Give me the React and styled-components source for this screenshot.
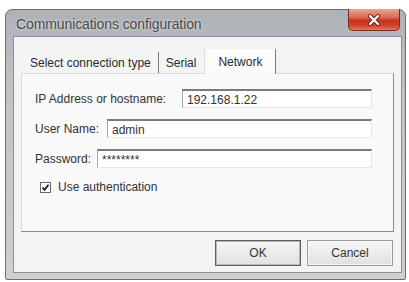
import React from "react";
import styled, { createGlobalStyle } from "styled-components";

const GlobalStyle = createGlobalStyle`
  body {
    margin: 0;
    background: #ffffff;
    font-family: "Liberation Sans", Arial, sans-serif;
  }
`

const Window = styled.div`
  margin: 9px 0 0 5px;
  width: 401px;
  height: 271px;
  box-sizing: border-box;
  border: 1px solid #6c6e70;
  border-radius: 7px 7px 2px 2px;
  background: linear-gradient(180deg, #aeb2b6 0%, #c0c3c6 30%, #cdd0d3 100%);
  padding: 0 3px 6px 7px;
  display: flex;
  flex-direction: column;
`

const TitleBar = styled.div`
  height: 26px;
  display: flex;
  justify-content: space-between;
  align-items: flex-start;
`

const Title = styled.div`
  padding: 6px 0 0 3px;
  font-size: 14px;
  color: #4a4a4a;
  text-shadow: 0 0 3px rgba(255, 255, 255, 0.8);
  letter-spacing: -0.1px;
`

const CloseButton = styled.div`
  margin: -1px 2px 0 0;
  width: 52px;
  height: 22px;
  box-sizing: border-box;
  border: 1px solid #7d2a20;
  border-top: none;
  border-radius: 0 0 5px 5px;
  background: linear-gradient(180deg, #e9a596 0%, #dc6a55 40%, #c8301c 55%, #d1452d 80%, #e17a5c 100%);
  display: flex;
  align-items: center;
  justify-content: center;
`

const Client = styled.div`
  flex: 1;
  background: #f3f3f3;
  border: 1px solid #8e9094;
  padding: 13px 7px 4px 7px;
  display: flex;
  flex-direction: column;
`

const TabStrip = styled.div`
  height: 23px;
  display: flex;
  align-items: flex-end;
  padding-left: 2px;
`

const Tab = styled.div`
  height: ${p => (p.active ? 25 : 21)}px;
  padding: 0 ${p => p.pad}px;
  box-sizing: border-box;
  display: flex;
  align-items: center;
  font-size: 12px;
  color: #2a2a2a;
  background: ${p => (p.active ? "#fbfbfb" : "#f4f4f4")};
  border-right: 1px solid ${p => p.edge};
  border-left: ${p => (p.active ? "1px solid #dcdcdc" : "none")};
  margin-bottom: ${p => (p.active ? -1 : 0)}px;
  position: relative;
  z-index: ${p => (p.active ? 1 : 0)};
`

const Panel = styled.div`
  height: 159px;
  box-sizing: border-box;
  background: #f9f9f9;
  border: 1px solid #dadada;
  border-right-color: #8a8a8a;
  border-bottom-color: #8a8a8a;
  padding: 15px 21px 0 13px;
  display: flex;
  flex-direction: column;
  gap: 11px;
`

const Row = styled.div`
  display: flex;
  align-items: center;
  height: 19px;
`

const Label = styled.label`
  width: ${p => p.w}px;
  flex-shrink: 0;
  font-size: 12px;
  color: #333333;
`

const Field = styled.div`
  flex: 1;
  height: 19px;
  box-sizing: border-box;
  background: #ffffff;
  border-top: 2px solid #7a7a7a;
  border-left: 1px solid #a8a8a8;
  border-right: 1px solid #e4e4e4;
  border-bottom: 1px solid #e8e8e8;
  padding: 1px 0 0 4px;
  font-size: 12px;
  color: #333;
  display: flex;
  align-items: center;
`

const CheckRow = styled.div`
  display: flex;
  align-items: center;
  margin: 1px 0 0 5px;
  gap: 7px;
  font-size: 12px;
  color: #333333;
`

const Box = styled.div`
  width: 11px;
  height: 11px;
  box-sizing: border-box;
  border: 1px solid #6a6a6a;
  background: #ffffff;
  display: flex;
  align-items: center;
  justify-content: center;
`

const ButtonRow = styled.div`
  display: flex;
  justify-content: flex-end;
  gap: 6px;
  margin-top: 8px;
  padding-right: 1px;
`

const Button = styled.div`
  width: 86px;
  height: 26px;
  box-sizing: border-box;
  border: 1px solid ${p => (p.primary ? "#5c5c5c" : "#9a9a9a")};
  box-shadow: ${p => (p.primary ? "inset 0 0 0 1px #b8b8b8" : "inset 0 0 0 1px #f8f8f8")};
  background: linear-gradient(180deg, #f6f6f6 0%, #ececec 50%, #e0e0e0 100%);
  display: flex;
  align-items: center;
  justify-content: center;
  font-size: 12px;
  color: #333;
`

const CloseGlyph = () => (
  <svg width="14" height="12" viewBox="0 0 14 12">
    <path d="M3 2 L11 10 M11 2 L3 10" stroke="#6b2418" strokeWidth="4" strokeLinecap="round" />
    <path d="M3 2 L11 10 M11 2 L3 10" stroke="#ffffff" strokeWidth="2.2" strokeLinecap="round" />
  </svg>
)

const CheckMark = () => (
  <svg width="9" height="9" viewBox="0 0 9 9">
    <path d="M1.5 4.5 L3.5 6.8 L7.5 1.8" fill="none" stroke="#1a1a1a" strokeWidth="1.8" />
  </svg>
)

const App = () => {
  return (
    <>
      <GlobalStyle />
      <Window>
        <TitleBar>
          <Title>Communications configuration</Title>
          <CloseButton>
            <CloseGlyph />
          </CloseButton>
        </TitleBar>
        <Client>
          <TabStrip>
            <Tab pad={7} edge="#7a7a7a">Select connection type</Tab>
            <Tab pad={7} edge="#f4f4f4">Serial</Tab>
            <Tab active pad={13} edge="#7a7a7a">Network</Tab>
          </TabStrip>
          <Panel>
            <Row>
              <Label w={147}>IP Address or hostname:</Label>
              <Field>192.168.1.22</Field>
            </Row>
            <Row>
              <Label w={72}>User Name:</Label>
              <Field>admin</Field>
            </Row>
            <Row>
              <Label w={62}>Password:</Label>
              <Field>********</Field>
            </Row>
            <CheckRow>
              <Box>
                <CheckMark />
              </Box>
              Use authentication
            </CheckRow>
          </Panel>
          <ButtonRow>
            <Button primary>OK</Button>
            <Button>Cancel</Button>
          </ButtonRow>
        </Client>
      </Window>
    </>
  )
}

export default App;
